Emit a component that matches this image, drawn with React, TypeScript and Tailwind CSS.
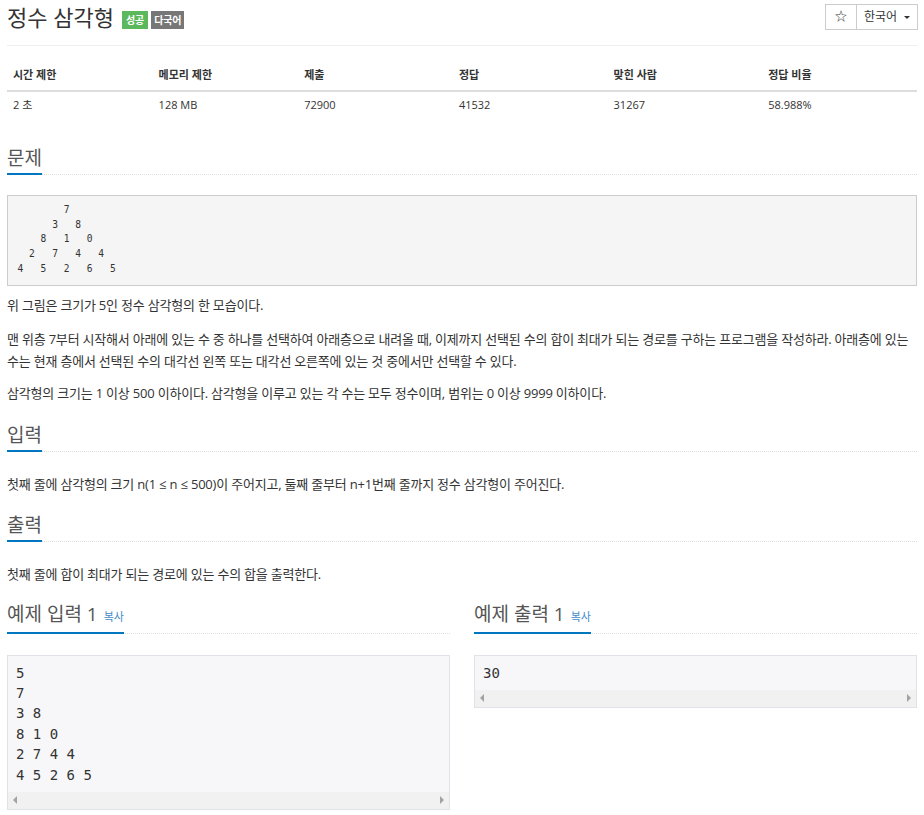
import React from 'react';

const sans = "font-['Open_Sans','Noto_Sans_CJK_KR',sans-serif]";
const mono = "font-['DejaVu_Sans_Mono','Liberation_Mono',monospace]";

const stats = [
   { label: '시간 제한', value: '2 초', w: 'w-[16%]' },
   { label: '메모리 제한', value: '128 MB', w: 'w-[16%]' },
   { label: '제출', value: '72900', w: 'w-[17%]' },
   { label: '정답', value: '41532', w: 'w-[17%]' },
   { label: '맞힌 사람', value: '31267', w: 'w-[17%]' },
   { label: '정답 비율', value: '58.988%', w: 'w-[17%]' },
];

const triangle = `        7
      3   8
    8   1   0
  2   7   4   4
4   5   2   6   5`;

function Headline({ children, copy }: { children: React.ReactNode; copy?: boolean }) {
   return (
      <div className="border-b border-dotted border-[#ddd]">
         <h2 className="inline-flex items-baseline gap-[6px] border-b-2 border-[#0076c0] -mb-px pb-[3px] text-[19px] leading-[24px] text-[#555] font-normal">
            {children}
            {copy && <span className="text-[11px] text-[#428bca]">복사</span>}
         </h2>
      </div>
   );
}

function ScrollBar() {
   return (
      <div className="flex items-center justify-between h-[17px] bg-[#f1f1f1] px-[5px]">
         <span className="w-0 h-0 border-y-[4px] border-y-transparent border-r-[4px] border-r-[#a3a3a3]" />
         <span className="w-0 h-0 border-y-[4px] border-y-transparent border-l-[4px] border-l-[#a3a3a3]" />
      </div>
   );
}

function Sample({ text }: { text: string }) {
   return (
      <div className="border border-[#e1e1e8] bg-[#f7f7f9]">
         <pre className={`${mono} text-[14px] leading-[20.4px] text-[#333] px-[8px] pt-[7px] pb-[7px] whitespace-pre`}>{text}</pre>
         <ScrollBar />
      </div>
   );
}

export default function App() {
   return (
      <div className={`${sans} bg-white text-[#333] w-[924px] min-h-[815px] px-[7px]`}>
         {/* Header */}
         <div className="flex justify-between items-start h-[46px] border-b border-[#eee]">
            <div className="flex items-center gap-[8px] pt-[2px]">
               <h1 className="text-[22px] leading-[30px] text-[#333] font-normal">정수 삼각형</h1>
               <div className="flex gap-[3px] mt-[6px]">
                  <span className="bg-[#5cb85c] text-white text-[10px] font-bold px-[4px] leading-[18px]">성공</span>
                  <span className="bg-[#777] text-white text-[10px] font-bold px-[3px] leading-[18px] tracking-[-0.3px]">다국어</span>
               </div>
            </div>
            <div className="flex mt-[4px] mr-[-1px] border border-[#ccc] h-[26px] text-[12px] text-[#333]">
               <span className="w-[31px] flex items-center justify-center border-r border-[#ccc]">☆</span>
               <span className="w-[60px] flex items-center justify-center gap-[7px]">
                  한국어
                  <span className="w-0 h-0 border-x-[3px] border-x-transparent border-t-[3px] border-t-[#333]" />
               </span>
            </div>
         </div>

         {/* Stats table */}
         <table className="w-full mt-[15px] text-[11px] text-[#333] border-collapse">
            <thead>
               <tr className="border-b-2 border-[#ddd]">
                  {stats.map((s) => (
                     <th key={s.label} className={`${s.w} text-left font-bold px-[6px] h-[30px]`}>{s.label}</th>
                  ))}
               </tr>
            </thead>
            <tbody>
               <tr>
                  {stats.map((s) => (
                     <td key={s.label} className="px-[6px] h-[28px]">{s.value}</td>
                  ))}
               </tr>
            </tbody>
         </table>

         {/* Problem */}
         <div className="mt-[27px]">
            <Headline>문제</Headline>
         </div>
         <pre className={`${mono} mt-[20px] border border-[#ccc] bg-[#f5f5f5] text-[9.6px] leading-[14.7px] text-[#333] px-[9.5px] pt-[7px] pb-[8px]`}>{triangle}</pre>

         <div className="text-[13px] leading-[22px] tracking-[-0.2px] mt-[8px]">
            <p>위 그림은 크기가 5인 정수 삼각형의 한 모습이다.</p>
            <p className="mt-[12px]">
               맨 위층 7부터 시작해서 아래에 있는 수 중 하나를 선택하여 아래층으로 내려올 때, 이제까지 선택된 수의 합이 최대가 되는 경로를 구하는 프로그램을 작성하라. 아래층에 있는 수는 현재 층에서 선택된 수의 대각선 왼쪽 또는 대각선 오른쪽에 있는 것 중에서만 선택할 수 있다.
            </p>
            <p className="mt-[10px]">
               삼각형의 크기는 1 이상 500 이하이다. 삼각형을 이루고 있는 각 수는 모두 정수이며, 범위는 0 이상 9999 이하이다.
            </p>
         </div>

         {/* Input */}
         <div className="mt-[19px]">
            <Headline>입력</Headline>
         </div>
         <p className="text-[13px] leading-[22px] tracking-[-0.2px] mt-[21px]">
            첫째 줄에 삼각형의 크기 n(1 ≤ n ≤ 500)이 주어지고, 둘째 줄부터 n+1번째 줄까지 정수 삼각형이 주어진다.
         </p>

         {/* Output */}
         <div className="mt-[18px]">
            <Headline>출력</Headline>
         </div>
         <p className="text-[13px] leading-[22px] tracking-[-0.2px] mt-[21px]">첫째 줄에 합이 최대가 되는 경로에 있는 수의 합을 출력한다.</p>

         {/* Samples */}
         <div className="grid grid-cols-2 gap-[24px] mt-[17px]">
            <div>
               <Headline copy>예제 입력 1</Headline>
               <div className="mt-[21px]">
                  <Sample text={`5\n7\n3 8\n8 1 0\n2 7 4 4\n4 5 2 6 5`} />
               </div>
            </div>
            <div>
               <Headline copy>예제 출력 1</Headline>
               <div className="mt-[21px]">
                  <Sample text="30" />
               </div>
            </div>
         </div>
      </div>
   );
}
